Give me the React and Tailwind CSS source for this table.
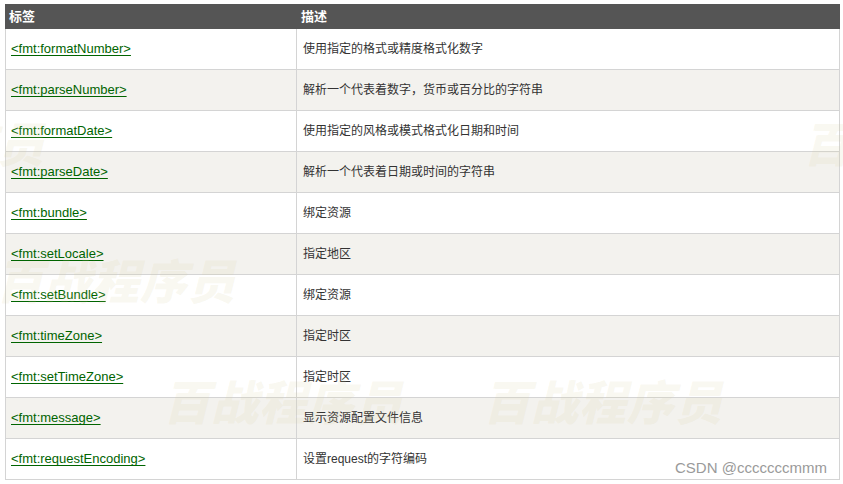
import React from 'react'

const rows = [
  ['<fmt:formatNumber>', '使用指定的格式或精度格式化数字'],
  ['<fmt:parseNumber>', '解析一个代表着数字，货币或百分比的字符串'],
  ['<fmt:formatDate>', '使用指定的风格或模式格式化日期和时间'],
  ['<fmt:parseDate>', '解析一个代表着日期或时间的字符串'],
  ['<fmt:bundle>', '绑定资源'],
  ['<fmt:setLocale>', '指定地区'],
  ['<fmt:setBundle>', '绑定资源'],
  ['<fmt:timeZone>', '指定时区'],
  ['<fmt:setTimeZone>', '指定时区'],
  ['<fmt:message>', '显示资源配置文件信息'],
  ['<fmt:requestEncoding>', '设置request的字符编码'],
]

// faint watermark stamped over the screenshot
const Mark = ({ className }) => (
  <div
    className={`absolute pointer-events-none select-none whitespace-nowrap italic font-black text-[47px] leading-none tracking-[1px] text-[rgba(214,204,150,0.15)] ${className}`}
    style={{ fontFamily: '"Noto Sans CJK SC", sans-serif' }}
  >
    百战程序员
  </div>
)

const App = () => {
  return (
    <div className="relative w-[843px] h-[484px] bg-white overflow-hidden pl-[5px] pt-[4px]" style={{ fontFamily: '"Liberation Sans", Arial, "Noto Sans CJK SC", sans-serif' }}>
      <div className="w-[835px]">
        <div className="grid grid-cols-[292px_543px] h-[25px] bg-[#555555] text-white font-bold text-[13px]">
          <div className="flex items-center pl-[4px]">标签</div>
          <div className="flex items-center pl-[4px]">描述</div>
        </div>
        {rows.map(([tag, desc], i) => (
          <div
            key={i}
            className={`grid grid-cols-[292px_543px] h-[41px] border-b border-[#d4d4d4] ${i % 2 === 1 ? 'bg-[#f3f2ee]' : 'bg-white'}`}
          >
            <div className="flex items-center border-l border-r border-[#d4d4d4] pl-[5px]">
              <a href="#" className="text-[13px] text-[#006400] underline underline-offset-[2px]">{tag}</a>
            </div>
            <div className="flex items-center border-r border-[#d4d4d4] pl-[6px] text-[12px] text-[#333333]">
              {desc}
            </div>
          </div>
        ))}
      </div>

      <Mark className="left-[-195px] top-[118px]" />
      <Mark className="left-[803px] top-[118px]" />
      <Mark className="left-[-4px] top-[255px]" />
      <Mark className="left-[163px] top-[376px]" />
      <Mark className="left-[483px] top-[376px]" />

      <div className="absolute left-[675px] top-[460px] text-[15px] leading-none text-[#9a9a9a]">
        CSDN @cccccccmmm
      </div>
    </div>
  )
}

export default App
